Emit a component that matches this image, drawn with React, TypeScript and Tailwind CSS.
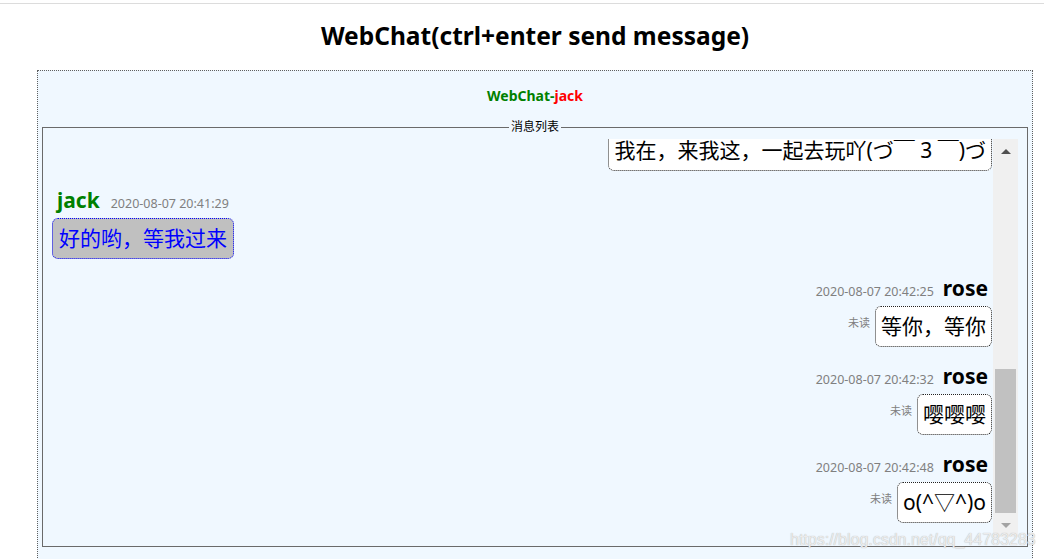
const font = "font-['Noto_Sans','Noto_Sans_CJK_SC',sans-serif]";

type Msg = { time: string; text: string };

const roseMsgs: Msg[] = [
  { time: "2020-08-07 20:42:25", text: "等你，等你" },
  { time: "2020-08-07 20:42:32", text: "嘤嘤嘤" },
  { time: "2020-08-07 20:42:48", text: "o(^▽^)o" },
];

const RoseMessage = ({ msg }: { msg: Msg }) => (
  <div className="flex flex-col items-end">
    <div className="flex items-baseline gap-[9px] pr-[4px] h-[26px]">
      <span className="text-[12.5px] text-[#808080]">{msg.time}</span>
      <span className="text-[21px] leading-[26px] font-bold text-black">rose</span>
    </div>
    <div className="flex items-start gap-[5px] mt-[5px]">
      <span className="text-[11px] text-[#808080] mt-[9px]">未读</span>
      <div className="bg-white border border-dotted border-[#222] rounded-[6px] px-[5px] py-[5px] text-[21px] leading-[29px] text-black">
        {msg.text}
      </div>
    </div>
  </div>
);

const Scrollbar = () => (
  <div className="w-[25px] h-full bg-[#f0f0f0] flex flex-col shrink-0">
    <div className="h-[25px] flex items-center justify-center">
      <div className="w-0 h-0 border-x-[5px] border-x-transparent border-b-[5px] border-b-[#505050]" />
    </div>
    <div className="flex-1 flex flex-col justify-end">
      <div className="h-[144px] mx-[2px] bg-[#c1c1c1]" />
    </div>
    <div className="h-[24px] flex items-center justify-center">
      <div className="w-0 h-0 border-x-[5px] border-x-transparent border-t-[5px] border-t-[#a3a3a3]" />
    </div>
  </div>
);

export default function App() {
  return (
    <div className={`relative min-h-[559px] bg-white overflow-hidden ${font}`}>
      <div className="h-[3px]" />
      <div className="h-px bg-[#dcdcdc]" />
      <div className="ml-[37px] w-[996px]">
        <h1 className="mt-[16px] text-center text-[24.5px] leading-[32px] font-bold text-black">
          WebChat(ctrl+enter send message)
        </h1>
        <div className="mt-[18px] border border-dotted border-[#5f5f5f] bg-[#f0f8ff] pt-[16px] pb-[30px]">
          <div className="text-center text-[14px] leading-[18px] font-bold">
            <span className="text-[#008000]">WebChat-</span>
            <span className="text-[#ff0000]">jack</span>
          </div>
          <fieldset className="mt-[14px] mx-[4px] border border-[#6a6a6a] pl-[9px] pr-[9px] pt-[4px] pb-[9px]">
            <legend className="mx-auto px-[2px] text-[12px] leading-[16px] text-black">消息列表</legend>
            <div className="flex h-[398px]">
              <div className="flex-1 overflow-hidden flex flex-col justify-end gap-[16px] pb-[14px] pr-[1px]">
                <div className="flex justify-end">
                  <div className="bg-white border border-dotted border-[#222] rounded-[6px] px-[5px] py-[5px] text-[21px] leading-[29px] text-black whitespace-nowrap">
                    我在，来我这，一起去玩吖(づ￣ 3 ￣)づ
                  </div>
                </div>
                <div className="flex flex-col items-start">
                  <div className="flex items-baseline gap-[11px] pl-[5px] h-[26px]">
                    <span className="text-[21px] leading-[26px] font-bold text-[#008000]">jack</span>
                    <span className="text-[12.5px] text-[#808080]">2020-08-07 20:41:29</span>
                  </div>
                  <div className="mt-[5px] bg-[#c0c0c0] border border-dotted border-[#0000ff] rounded-[6px] px-[6px] py-[5px] text-[21px] leading-[29px] text-[#0000ff]">
                    好的哟，等我过来
                  </div>
                </div>
                {roseMsgs.map((m) => (
                  <RoseMessage key={m.time} msg={m} />
                ))}
              </div>
              <Scrollbar />
            </div>
          </fieldset>
        </div>
      </div>
      <div className="absolute left-[790px] top-[528px] text-[16px] leading-[24px] text-[#ececec] [text-shadow:0_0_1px_#aaa] font-['Liberation_Sans',sans-serif] whitespace-nowrap pointer-events-none">
        https://blog.csdn.net/qq_44783283
      </div>
    </div>
  );
}
